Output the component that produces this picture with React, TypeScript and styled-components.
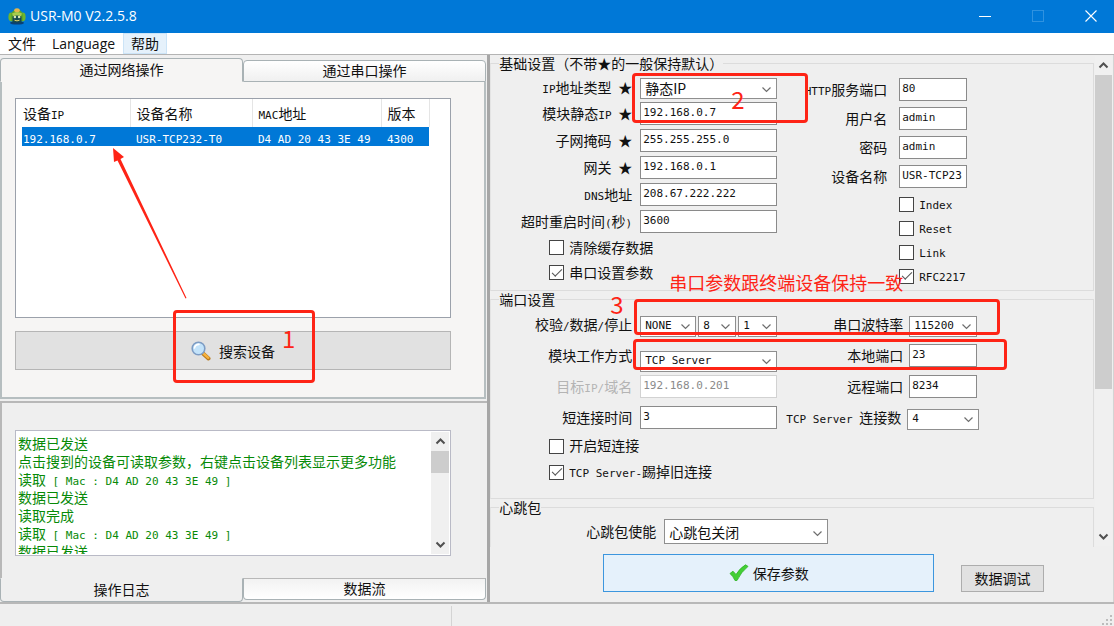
import React from "react";
import styled, { createGlobalStyle, css } from "styled-components";

const cjk = '"Noto Sans CJK SC", sans-serif';
const mono = '"DejaVu Sans Mono", "Noto Sans CJK SC", monospace';
const ui = '"Open Sans", "Noto Sans CJK SC", sans-serif';
const red = "#fe2416";

const GlobalStyle = createGlobalStyle`
  *, *::before, *::after { box-sizing: border-box; }
  body { margin: 0; background: #efefef; color: #111; font: 14px/18px ${cjk}; }
  button, input, select { font: inherit; color: inherit; margin: 0; border-radius: 0; }
`;

const Page = styled.div`
  min-height: 100vh;
  display: flex;
  flex-direction: column;
`;

const Latin = styled.span`
  font-family: ${mono};
  font-size: 11px;
  line-height: 11px;
  white-space: pre;
`;

/* Sets the half-width runs of a string in the narrow fixed-pitch face. */
function Mixed({ children }: { children: string }) {
  return (
    <>
      {children
        .split(/([\x20-\x7e]+)/)
        .filter(Boolean)
        .map((part, i) =>
          /^[\x20-\x7e]+$/.test(part) ? <Latin key={i}>{part}</Latin> : part
        )}
    </>
  );
}

/* ---------- window chrome ---------- */

const TitleBar = styled.header`
  display: flex;
  align-items: center;
  height: 33px;
  padding: 0 0 2px 8px;
  background: #0078d7;
  color: #fff;
`;

const Title = styled.h1`
  flex: 1;
  margin: 0 0 0 4px;
  font: 400 14px/20px ${ui};
`;

const WindowButtons = styled.div`
  display: flex;
  gap: 7px;
`;

const WindowButton = styled.button`
  display: grid;
  place-items: center;
  width: 46px;
  height: 30px;
  padding: 0;
  border: 0;
  background: transparent;
`;

const MenuBar = styled.nav`
  display: flex;
  height: 21px;
  background: #fff;
`;

const MenuItem = styled.button<{ $hot?: boolean }>`
  height: 21px;
  padding: 0 7px;
  border: 1px solid ${(p) => (p.$hot ? "#cce4f7" : "transparent")};
  background: ${(p) => (p.$hot ? "#e5f1fb" : "transparent")};
  font: 400 14px/18px ${ui};
`;

const Main = styled.main`
  flex: 1 1 auto;
  display: grid;
  grid-template-columns: minmax(0, 11fr) minmax(0, 14fr);
  border-top: 1px solid #b4b4b4;
  border-bottom: 2px solid #b8b8b8;
`;

const StatusBar = styled.footer`
  display: flex;
  height: 22px;
  padding-top: 2px;
`;

const StatusCell = styled.div`
  width: 452px;
  border-right: 1px solid #d4d4d4;
`;

const Grip = styled.svg`
  margin-left: auto;
  align-self: flex-end;
`;

/* ---------- left side ---------- */

const LeftPane = styled.section`
  position: relative;
  display: flex;
  flex-direction: column;
  border-right: 3px solid #a6a6a6;
`;

const TopCard = styled.div`
  flex: 1 1 auto;
  display: flex;
  flex-direction: column;
  padding: 3px 1px 0 0;
`;

const TabRow = styled.div<{ $bottom?: boolean }>`
  display: flex;
  align-items: ${(p) => (p.$bottom ? "flex-start" : "flex-end")};
  height: 24px;
`;

const Tab = styled.button<{ $active?: boolean; $bottom?: boolean }>`
  flex: 1;
  height: ${(p) => (p.$active ? 24 : 22)}px;
  padding: 0 0 2px;
  line-height: 18px;
  border: 1px solid #a9b2b5;
  ${(p) =>
    p.$bottom
      ? css`
          border-radius: 0 0 4px 4px;
          border-top-color: ${p.$active ? "transparent" : "#b8b8b8"};
        `
      : css`
          border-radius: 4px 4px 0 0;
          border-bottom-color: ${p.$active ? "transparent" : "#a9b2b5"};
        `}
  background: ${(p) =>
    p.$active
      ? p.$bottom
        ? "#efefef"
        : "#f6f5f4"
      : p.$bottom
      ? "linear-gradient(#f2f2f2, #fff)"
      : "linear-gradient(#fff, #f0f0f0)"};
`;

const TopBody = styled.div`
  flex: 1 1 auto;
  display: flex;
  flex-direction: column;
  gap: 13px;
  padding: 16px 33px 27px 13px;
  border: solid #b6bec0;
  border-width: 0 2px 2px;
  background: #f6f5f4;
`;

const DeviceList = styled.div`
  flex: 1 1 auto;
  padding-left: 6px;
  border: 1px solid #9ba1ab;
  background: #fff;
`;

const DeviceTable = styled.table`
  width: 407px;
  table-layout: fixed;
  border-collapse: collapse;

  th, td {
    padding: 0 0 0 6px;
    text-align: left;
    font-weight: 400;
    white-space: nowrap;
  }
  th:first-child, td:first-child { padding-left: 1px; }
  th { height: 28px; border-right: 1px solid #e5e5e5; }
  td { height: 19px; line-height: 16px; background: #0078d7; color: #fff; }
`;

const SearchButton = styled.button`
  display: flex;
  align-items: center;
  justify-content: center;
  gap: 8px;
  height: 39px;
  border: 1px solid #b5b5b5;
  background: #e1e1e1;
`;

const BottomCard = styled.div`
  margin-top: 2px;
  padding-right: 1px;
  border-top: 2px solid #b8b8b8;
`;

const BottomBody = styled.div`
  padding: 27px 35px 22px 13px;
  border-left: 2px solid #b8b8b8;
`;

const LogBox = styled.div`
  display: flex;
  height: 126px;
  border: 1px solid #b9bac6;
  background: #fff;
`;

const LogText = styled.div`
  flex: 1;
  margin: 3px 0 1px;
  padding-left: 2px;
  overflow: hidden;
  color: #078a07;
  white-space: nowrap;
`;

const ScrollTrack = styled.div<{ $width: number }>`
  display: flex;
  flex-direction: column;
  justify-content: space-between;
  align-items: center;
  width: ${(p) => p.$width}px;
  margin: 1px;
  background: #f0f0f0;
`;

const ScrollTop = styled.div`
  align-self: stretch;
  display: flex;
  flex-direction: column;
  align-items: center;
`;

const Thumb = styled.div<{ $height: number }>`
  align-self: stretch;
  height: ${(p) => p.$height}px;
  background: #cdcdcd;
`;

const ArrowBox = styled.span`
  display: grid;
  place-items: center;
  height: 19px;
`;

/* ---------- right side ---------- */

const RightPane = styled.section`
  position: relative;
  display: flex;
  flex-direction: column;
  border-right: 1px solid #d4d4d4;
`;

const Scroller = styled.div`
  flex: 1 1 0;
  display: flex;
  overflow: hidden;
`;

const Groups = styled.div`
  flex: 1;
`;

const Group = styled.fieldset<{ $top: number; $bottom: number }>`
  display: flex;
  margin: 0;
  padding: ${(p) => p.$top}px 0 ${(p) => p.$bottom}px;
  border: 1px solid #dcdcdc;
  border-left-color: #e4e4e4;
`;

const Legend = styled.legend`
  margin-left: 8px;
  padding: 0;
  line-height: 16px;
`;

const Column = styled.div<{ $width: number; $gap: number }>`
  display: flex;
  flex-direction: column;
  gap: ${(p) => p.$gap}px;
  width: ${(p) => p.$width}px;
`;

const Row = styled.div<{ $height?: number; $gap?: number; $right?: number }>`
  display: flex;
  align-items: center;
  justify-content: flex-end;
  gap: ${(p) => p.$gap ?? 8}px;
  height: ${(p) => p.$height ?? 23}px;
  padding-right: ${(p) => p.$right ?? 0}px;
`;

const Label = styled.label<{ $dim?: boolean }>`
  padding-bottom: 2px;
  white-space: nowrap;
  color: ${(p) => (p.$dim ? "#b4b4b4" : "inherit")};
`;

const TextBox = styled.input<{ $width?: number }>`
  width: ${(p) => p.$width ?? 137}px;
  height: 23px;
  padding: 0 2px 2px;
  border: 1px solid #8a8a8a;
  background: #fff;
  font: 11px/16px ${mono};
  &:disabled { color: #8a8a8a; border-color: #d2d2d2; }
`;

const Drop = styled.span<{ $width: number; $height?: number; $end?: boolean }>`
  position: relative;
  display: block;
  align-self: ${(p) => (p.$end ? "flex-end" : "center")};
  width: ${(p) => p.$width}px;
  height: ${(p) => p.$height ?? 21}px;
  svg { position: absolute; right: 5px; top: 50%; margin-top: -2px; pointer-events: none; }
`;

const DropField = styled.select<{ $cjk?: boolean }>`
  appearance: none;
  width: 100%;
  height: 100%;
  padding: 0 4px;
  border: 1px solid #8f8f8f;
  background: #fff;
  font: ${(p) => (p.$cjk ? `14px/16px ${cjk}` : `11px/16px ${mono}`)};
`;

const Choices = styled.div`
  display: flex;
  gap: 2px;
`;

const CheckRow = styled.div<{ $height: number; $indent: number }>`
  display: flex;
  align-items: center;
  gap: 5px;
  height: ${(p) => p.$height}px;
  padding-left: ${(p) => p.$indent}px;
  white-space: nowrap;
`;

const Tick = styled.input`
  appearance: none;
  display: grid;
  place-items: center;
  width: 15px;
  height: 15px;
  border: 1px solid #444;
  background: #fff;
  &:checked::after {
    content: "";
    width: 10px;
    height: 5px;
    margin-bottom: 3px;
    border: solid #555;
    border-width: 0 0 1px 1px;
    rotate: -45deg;
  }
`;

const Actions = styled.div`
  display: flex;
  align-items: flex-end;
  justify-content: space-between;
  padding: 7px 69px 10px 113px;
`;

const SaveButton = styled.button`
  display: flex;
  align-items: center;
  justify-content: center;
  gap: 4px;
  width: 331px;
  height: 38px;
  padding: 0;
  border: 1px solid #3c96de;
  background: #e5f1fb;
`;

const DebugButton = styled.button`
  width: 83px;
  height: 27px;
  padding: 0 0 2px;
  border: 1px solid #adadad;
  background: #e1e1e1;
`;

/* ---------- mark-up drawn over the window ---------- */

type Spot = { $x: number; $y: number };

const Frame = styled.div<Spot & { $w: number; $h: number }>`
  position: absolute;
  left: ${(p) => p.$x}px;
  top: ${(p) => p.$y}px;
  width: ${(p) => p.$w}px;
  height: ${(p) => p.$h}px;
  border: 3px solid ${red};
  border-radius: 4px;
  pointer-events: none;
`;

const Note = styled.span<Spot & { $size: number }>`
  position: absolute;
  left: ${(p) => p.$x}px;
  top: ${(p) => p.$y}px;
  color: ${red};
  font: 400 ${(p) => p.$size}px/24px ${cjk};
  white-space: nowrap;
  pointer-events: none;
`;

const Pointer = styled.svg`
  position: absolute;
  left: 110px;
  top: 90px;
  pointer-events: none;
`;

/* ---------- small drawings ---------- */

const Chevron = ({ up, bold }: { up?: boolean; bold?: boolean }) => (
  <svg width="11" height="7" viewBox="0 0 11 7" aria-hidden="true">
    <path
      d={up ? "M1.5 5.5 5.5 1.5 9.5 5.5" : "M1.5 1.5 5.5 5.5 9.5 1.5"}
      fill="none"
      stroke={bold ? "#505050" : "#6e6e6e"}
      strokeWidth={bold ? 2 : 1.2}
    />
  </svg>
);

const AppIcon = () => (
  <svg width="18" height="18" viewBox="0 0 18 18" aria-hidden="true">
    <ellipse cx="9" cy="16" rx="7" ry="1.6" fill="#0a3f73" />
    <ellipse cx="3.4" cy="10" rx="3" ry="4.4" fill="#6eb52b" />
    <ellipse cx="14.6" cy="10" rx="3" ry="4.4" fill="#6eb52b" />
    <path d="M3 9Q3.500 2.500 9 2.500T15 9V14H3Z" fill="#5da52a" />
    <ellipse cx="9" cy="3.2" rx="2.8" ry="2" fill="#e3b64c" />
    <path d="M4 6.500Q9 3.500 14 6.500L13 9H5Z" fill="#a9cc4e" />
    <path d="M4.500 9.500Q9 7.500 13.500 9.500V15.500H4.500Z" fill="#174a4c" />
    <circle cx="6.9" cy="10" r="1.3" fill="#d9e8b4" />
    <circle cx="11.1" cy="10" r="1.3" fill="#d9e8b4" />
    <path d="M6.500 13.200Q9 14.500 11.500 13.200" stroke="#e6d36a" fill="none" />
  </svg>
);

const Magnifier = () => (
  <svg width="20" height="20" viewBox="0 0 20 20" aria-hidden="true">
    <path d="M12 12.5 17.5 17.5" stroke="#b8791c" strokeWidth="4" strokeLinecap="round" />
    <path d="M12.5 12.5 17.3 16.8" stroke="#f7b23d" strokeWidth="2.4" strokeLinecap="round" />
    <circle cx="7.5" cy="7.5" r="6.3" fill="#c3e3fa" stroke="#7d9cc4" strokeWidth="1.6" />
    <path d="M3.5 7Q4 3.6 8 3.4" stroke="#fff" strokeWidth="1.6" fill="none" strokeLinecap="round" />
  </svg>
);

const GreenCheck = () => (
  <svg width="20" height="18" viewBox="0 0 20 18" aria-hidden="true">
    <path
      d="M1 9.5 4 7.2 7 10.500Q11 4 16.5 .8L19 2.4Q12 8 8 16.5H6Q4 12 1 9.5Z"
      fill="#43cf35"
      stroke="#2fb324"
      strokeWidth=".8"
    />
  </svg>
);

/* ---------- form pieces ---------- */

type FieldProps = {
  id: string;
  label: string;
  value: string;
  width?: number;
  gap?: number;
  height?: number;
  right?: number;
  disabled?: boolean;
};

const Field = ({ id, label, value, width, gap, height, right, disabled }: FieldProps) => (
  <Row $gap={gap} $height={height} $right={right}>
    <Label htmlFor={id} $dim={disabled}>
      <Mixed>{label}</Mixed>
    </Label>
    <TextBox id={id} $width={width} defaultValue={value} disabled={disabled} />
  </Row>
);

type SelectProps = {
  id: string;
  value: string;
  width: number;
  height?: number;
  cjk?: boolean;
  end?: boolean;
  name?: string;
};

const Select = ({ id, value, width, height, cjk: wide, end, name }: SelectProps) => (
  <Drop $width={width} $height={height} $end={end}>
    <DropField id={id} $cjk={wide} aria-label={name}>
      <option>{value}</option>
    </DropField>
    <Chevron />
  </Drop>
);

type CheckProps = { id: string; label: string; checked?: boolean; height: number; indent: number };

const Check = ({ id, label, checked, height, indent }: CheckProps) => (
  <CheckRow $height={height} $indent={indent}>
    <Tick type="checkbox" id={id} defaultChecked={checked} />
    <Label htmlFor={id}>
      <Mixed>{label}</Mixed>
    </Label>
  </CheckRow>
);

const Scrollbar = ({ width, thumb }: { width: number; thumb: number }) => (
  <ScrollTrack $width={width}>
    <ScrollTop>
      <ArrowBox>
        <Chevron up bold />
      </ArrowBox>
      <Thumb $height={thumb} />
    </ScrollTop>
    <ArrowBox>
      <Chevron bold />
    </ArrowBox>
  </ScrollTrack>
);

const logLines = [
  "数据已发送",
  "点击搜到的设备可读取参数，右键点击设备列表显示更多功能",
  "读取 [ Mac : D4 AD 20 43 3E 49 ]",
  "数据已发送",
  "读取完成",
  "读取 [ Mac : D4 AD 20 43 3E 49 ]",
  "数据已发送",
];

const columns = [
  { title: "设备IP", value: "192.168.0.7", width: 108 },
  { title: "设备名称", value: "USR-TCP232-T0", width: 122 },
  { title: "MAC地址", value: "D4 AD 20 43 3E 49", width: 129 },
  { title: "版本", value: "4300", width: 48 },
];

export default function App() {
  return (
    <Page>
      <GlobalStyle />
      <TitleBar>
        <AppIcon />
        <Title>USR-M0 V2.2.5.8</Title>
        <WindowButtons>
          <WindowButton aria-label="最小化">
            <svg width="12" height="12" viewBox="0 0 12 12">
              <path d="M0 6.5H12" stroke="#fff" />
            </svg>
          </WindowButton>
          <WindowButton aria-label="最大化" disabled>
            <svg width="12" height="12" viewBox="0 0 12 12">
              <rect x=".5" y=".5" width="11" height="11" fill="none" stroke="#2f92e0" />
            </svg>
          </WindowButton>
          <WindowButton aria-label="关闭">
            <svg width="12" height="12" viewBox="0 0 12 12">
              <path d="M.5 .5 11.5 11.5M11.5 .5 .5 11.5" stroke="#fff" strokeWidth="1.1" />
            </svg>
          </WindowButton>
        </WindowButtons>
      </TitleBar>
      <MenuBar>
        <MenuItem>文件</MenuItem>
        <MenuItem>Language</MenuItem>
        <MenuItem $hot>帮助</MenuItem>
      </MenuBar>

      <Main>
        <LeftPane>
          <TopCard>
            <TabRow role="tablist">
              <Tab role="tab" aria-selected="true" $active>
                通过网络操作
              </Tab>
              <Tab role="tab" aria-selected="false">
                通过串口操作
              </Tab>
            </TabRow>
            <TopBody>
              <DeviceList>
                <DeviceTable>
                  <colgroup>
                    {columns.map((c) => (
                      <col key={c.title} width={c.width} />
                    ))}
                  </colgroup>
                  <thead>
                    <tr>
                      {columns.map((c) => (
                        <th key={c.title}>
                          <Mixed>{c.title}</Mixed>
                        </th>
                      ))}
                    </tr>
                  </thead>
                  <tbody>
                    <tr>
                      {columns.map((c) => (
                        <td key={c.title}>
                          <Mixed>{c.value}</Mixed>
                        </td>
                      ))}
                    </tr>
                  </tbody>
                </DeviceTable>
              </DeviceList>
              <SearchButton>
                <Magnifier />
                搜索设备
              </SearchButton>
            </TopBody>
          </TopCard>
          <BottomCard>
            <BottomBody>
              <LogBox>
                <LogText role="log">
                  {logLines.map((line, i) => (
                    <div key={i}>
                      <Mixed>{line}</Mixed>
                    </div>
                  ))}
                </LogText>
                <Scrollbar width={18} thumb={22} />
              </LogBox>
            </BottomBody>
            <TabRow role="tablist" $bottom>
              <Tab role="tab" aria-selected="true" $active $bottom>
                操作日志
              </Tab>
              <Tab role="tab" aria-selected="false" $bottom>
                数据流
              </Tab>
            </TabRow>
          </BottomCard>

          <Pointer width="80" height="155" viewBox="0 0 80 155" aria-hidden="true">
            <path d="M3 3 14 12 10.500 14 76.500 153 75.500 153.500 7.500 15.500 4 17Z" fill={red} />
          </Pointer>
          <Frame $x={173} $y={255} $w={142} $h={73} />
          <Note $x={282} $y={271} $size={24}>1</Note>
        </LeftPane>

        <RightPane>
          <Scroller>
            <Groups>
              <Group $top={7} $bottom={4}>
                <Legend>
                  <Mixed>基础设置（不带★的一般保持默认）</Mixed>
                </Legend>
                <Column $width={286} $gap={4}>
                  <Row $height={20}>
                    <Label htmlFor="ipType">
                      <Mixed>IP地址类型 ★</Mixed>
                    </Label>
                    <Select id="ipType" value="静态IP" width={137} cjk />
                  </Row>
                  <Field id="ip" label="模块静态IP ★" value="192.168.0.7" />
                  <Field id="mask" label="子网掩码 ★" value="255.255.255.0" />
                  <Field id="gateway" label="网关 ★" value="192.168.0.1" />
                  <Field id="dns" label="DNS地址" value="208.67.222.222" />
                  <Field id="timeout" label="超时重启时间(秒)" value="3600" />
                  <Check id="clear" label="清除缓存数据" height={21} indent={58} />
                  <Check id="serialSet" label="串口设置参数" checked height={21} indent={58} />
                </Column>
                <Column $width={190} $gap={6}>
                  <Field id="http" label="HTTP服务端口" value="80" width={68} gap={12} />
                  <Field id="user" label="用户名" value="admin" width={68} gap={12} />
                  <Field id="pass" label="密码" value="admin" width={68} gap={12} />
                  <Field id="devName" label="设备名称" value="USR-TCP23" width={68} gap={12} />
                  <Column $width={190} $gap={4}>
                    <Check id="index" label="Index" height={20} indent={122} />
                    <Check id="reset" label="Reset" height={20} indent={122} />
                    <Check id="link" label="Link" height={20} indent={122} />
                    <Check id="rfc" label="RFC2217" checked height={20} indent={122} />
                  </Column>
                </Column>
              </Group>

              <Group $top={3} $bottom={14}>
                <Legend>端口设置</Legend>
                <Column $width={286} $gap={2}>
                  <Row $height={29}>
                    <Label htmlFor="parity">
                      <Mixed>校验/数据/停止</Mixed>
                    </Label>
                    <Choices>
                      <Select id="parity" value="NONE" width={56} />
                      <Select id="bits" value="8" width={38} name="数据位" />
                      <Select id="stop" value="1" width={39} name="停止位" />
                    </Choices>
                  </Row>
                  <Row $height={29}>
                    <Label htmlFor="mode">模块工作方式</Label>
                    <Select id="mode" value="TCP Server" width={137} end />
                  </Row>
                  <Field id="target" label="目标IP/域名" value="192.168.0.201" height={29} disabled />
                  <Field id="short" label="短连接时间" value="3" height={29} />
                  <Check id="shortOn" label="开启短连接" height={24} indent={58} />
                  <Check id="kick" label="TCP Server-踢掉旧连接" checked height={24} indent={58} />
                </Column>
                <Column $width={202} $gap={2}>
                  <Row $height={29} $gap={6} $right={2}>
                    <Label htmlFor="baud">串口波特率</Label>
                    <Select id="baud" value="115200" width={68} />
                  </Row>
                  <Field id="local" label="本地端口" value="23" width={68} gap={6} height={29} right={2} />
                  <Field id="remote" label="远程端口" value="8234" width={68} gap={6} height={29} right={2} />
                  <Row $height={29} $gap={6}>
                    <Label htmlFor="conns">
                      <Mixed>TCP Server 连接数</Mixed>
                    </Label>
                    <Select id="conns" value="4" width={72} />
                  </Row>
                </Column>
              </Group>

              <Group $top={4} $bottom={20}>
                <Legend>心跳包</Legend>
                <Column $width={337} $gap={2}>
                  <Row $height={25}>
                    <Label htmlFor="heart">心跳包使能</Label>
                    <Select id="heart" value="心跳包关闭" width={164} height={25} cjk />
                  </Row>
                </Column>
              </Group>
            </Groups>
            <Scrollbar width={17} thumb={314} />
          </Scroller>
          <Actions>
            <SaveButton>
              <GreenCheck />
              保存参数
            </SaveButton>
            <DebugButton>数据调试</DebugButton>
          </Actions>

          <Frame $x={142} $y={18} $w={176} $h={50} />
          <Note $x={241} $y={32} $size={24}>2</Note>
          <Note $x={179} $y={215} $size={18}>串口参数跟终端设备保持一致</Note>
          <Note $x={120} $y={237} $size={24}>3</Note>
          <Frame $x={144} $y={244} $w={366} $h={36} />
          <Frame $x={143} $y={284} $w={374} $h={31} />
        </RightPane>
      </Main>

      <StatusBar>
        <StatusCell />
        <Grip width="12" height="12" viewBox="0 0 12 12" aria-hidden="true">
          <path d="M8 1h2v2H8zM8 5h2v2H8zM8 9h2v2H8zM4 5h2v2H4zM4 9h2v2H4zM0 9h2v2H0z" fill="#bcbcbc" />
        </Grip>
      </StatusBar>
    </Page>
  );
}
